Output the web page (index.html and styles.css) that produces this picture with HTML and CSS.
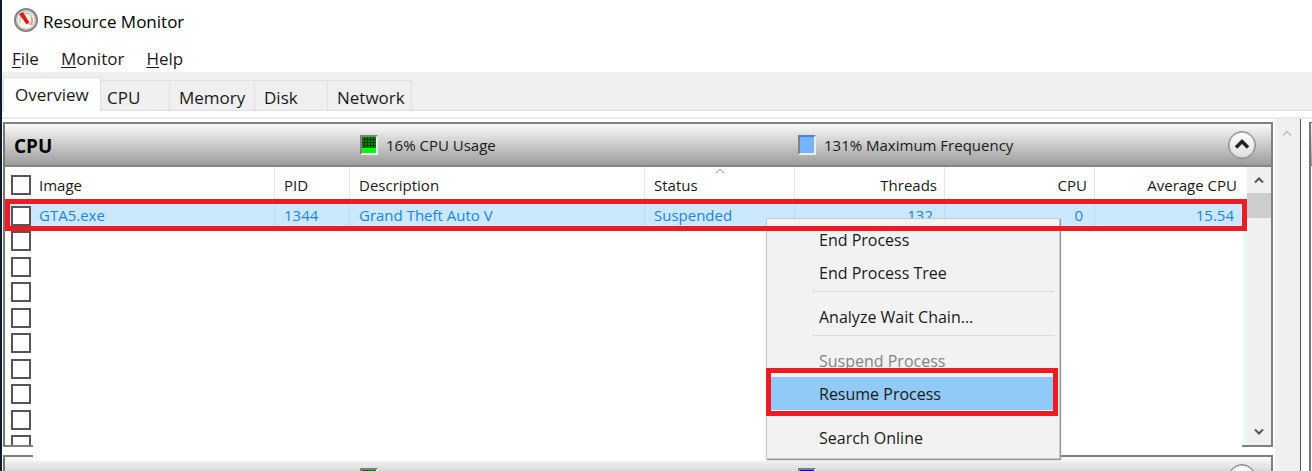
FILE: index.html
```html
<!DOCTYPE html>
<html lang="en">
<head>
    <meta charset="UTF-8">
    <title>Resource Monitor</title>
    <link rel="stylesheet" href="styles.css">
</head>
<body>
    <div class="window">
        <header class="title-bar">
            <svg class="app-icon" viewBox="0 0 24 24" width="24" height="24">
                <circle cx="12" cy="12" r="11" fill="#e4e2de" stroke="#85827d" stroke-width="2"/>
                <circle cx="12" cy="12" r="9" fill="#f8f6f2" stroke="#c5c2bc"/>
                <path d="M6 15V11a6 6 0 0 1 12 0v5h-3" fill="none" stroke="#c9bfb2" stroke-width="1.3"/>
                <path d="M17 9c2 3 1 6-1 8" fill="none" stroke="#eda273" stroke-width="1.8"/>
                <path d="M5 6L9 4L15.500 14.500L12.500 16.500Z" fill="#d8201f"/>
            </svg>
            <h1>Resource Monitor</h1>
        </header>

        <nav class="menu-bar">
            <button><u>F</u>ile</button>
            <button><u>M</u>onitor</button>
            <button><u>H</u>elp</button>
        </nav>

        <div class="tabs">
            <button class="tab active">Overview</button>
            <button class="tab tab-cpu">CPU</button>
            <button class="tab tab-memory">Memory</button>
            <button class="tab tab-disk">Disk</button>
            <button class="tab tab-network">Network</button>
        </div>

        <main class="content">
            <div class="panels">
                <section class="panel">
                    <div class="panel-header">
                        <h2>CPU</h2>
                        <div class="stat"><span class="meter green"></span>16% CPU Usage</div>
                        <div class="stat"><span class="meter blue"></span>131% Maximum Frequency</div>
                        <button class="collapse" aria-label="Collapse CPU">
                            <svg viewBox="0 0 28 28" width="28" height="28"><path d="M8 16.500L14 10.500L20 16.500" fill="none" stroke="#222" stroke-width="3.500"/></svg>
                        </button>
                    </div>
                    <div class="panel-body">
                        <table>
                            <colgroup>
                                <col class="col-image"><col class="col-pid"><col><col class="col-num"><col class="col-num"><col class="col-num"><col class="col-average">
                            </colgroup>
                            <thead>
                                <tr>
                                    <th><label><input type="checkbox">Image</label></th>
                                    <th>PID</th>
                                    <th>Description</th>
                                    <th class="sorted">Status<svg class="sort" viewBox="0 0 10 6" width="10" height="6"><path d="M1 5L5 1L9 5" fill="none" stroke="#999"/></svg></th>
                                    <th class="num">Threads</th>
                                    <th class="num">CPU</th>
                                    <th class="num">Average CPU</th>
                                </tr>
                            </thead>
                            <tbody>
                                <tr class="selected">
                                    <td><label><input type="checkbox">GTA5.exe</label></td>
                                    <td>1344</td>
                                    <td>Grand Theft Auto V</td>
                                    <td>Suspended</td>
                                    <td class="num">132</td>
                                    <td class="num">0</td>
                                    <td class="num">15.54</td>
                                </tr>
                                <tr><td colspan="7"><input type="checkbox" aria-label="Process 2"></td></tr>
                                <tr><td colspan="7"><input type="checkbox" aria-label="Process 3"></td></tr>
                                <tr><td colspan="7"><input type="checkbox" aria-label="Process 4"></td></tr>
                                <tr><td colspan="7"><input type="checkbox" aria-label="Process 5"></td></tr>
                                <tr><td colspan="7"><input type="checkbox" aria-label="Process 6"></td></tr>
                                <tr><td colspan="7"><input type="checkbox" aria-label="Process 7"></td></tr>
                                <tr><td colspan="7"><input type="checkbox" aria-label="Process 8"></td></tr>
                                <tr><td colspan="7"><input type="checkbox" aria-label="Process 9"></td></tr>
                                <tr><td colspan="7"><input type="checkbox" aria-label="Process 10"></td></tr>
                            </tbody>
                        </table>
                        <div class="scrollbar">
                            <svg viewBox="0 0 12 8" width="12" height="8"><path d="M2 6.500L6 2.500L10 6.500" fill="none" stroke="#555" stroke-width="2"/></svg>
                            <div class="thumb"></div>
                            <svg class="down" viewBox="0 0 12 8" width="12" height="8"><path d="M2 1.500L6 5.500L10 1.500" fill="none" stroke="#555" stroke-width="2"/></svg>
                        </div>
                    </div>
                </section>

                <section class="panel">
                    <div class="panel-header">
                        <h2></h2>
                        <div class="stat"><span class="meter green"></span></div>
                        <div class="stat"><span class="meter navy"></span></div>
                        <button class="collapse" aria-label="Expand panel"></button>
                    </div>
                </section>

                <div class="blank blank-left"></div>
                <div class="blank blank-right"></div>

                <div class="context-menu">
                    <button>End Process</button>
                    <button>End Process Tree</button>
                    <hr>
                    <button>Analyze Wait Chain...</button>
                    <hr>
                    <button disabled>Suspend Process</button>
                    <button class="current">Resume Process</button>
                    <hr>
                    <button>Search Online</button>
                </div>
                <div class="row-frame"></div>
            </div>

            <div class="page-scroll">
                <svg viewBox="0 0 12 8" width="12" height="8"><path d="M2 6.500L6 2.500L10 6.500" fill="none" stroke="#bbb" stroke-width="1.500"/></svg>
            </div>
            <aside class="graphs"><div class="panel-header"></div></aside>
        </main>
    </div>
</body>
</html>
```

FILE: styles.css
```css
* {
    box-sizing: border-box;
}
body {
    margin: 0;
    overflow: hidden;
    background: #fff;
    color: #1a1a1a;
    font-family: "Open Sans", "Noto Sans", sans-serif;
    font-size: 16px;
    line-height: 24px;
}
h1, h2 {
    margin: 0;
}
button {
    border: none;
    background: none;
    padding: 0;
    color: inherit;
    font: inherit;
    text-align: left;
}
svg {
    display: block;
}
.window {
    display: flex;
    flex-direction: column;
    height: 100vh;
    border-left: 2px solid #0d1b2c;
}

/* title and menus */
.title-bar {
    display: flex;
    align-items: center;
    gap: 5px;
    flex: none;
    height: 44px;
    padding: 0 12px 4px;
}
.title-bar h1 {
    font-size: 17px;
    font-weight: normal;
    color: #000;
    padding-top: 3px;
}
.menu-bar {
    display: flex;
    gap: 22px;
    flex: none;
    height: 28px;
    padding: 3px 10px;
    font-size: 17px;
}
.menu-bar u {
    text-underline-offset: 2px;
}
.tabs {
    display: flex;
    align-items: flex-end;
    flex: none;
    height: 39px;
    padding-left: 1px;
    background: #efefef;
    border-bottom: 1px solid #e0e0e0;
}
.tab {
    height: 30px;
    padding: 4px 0 0 9px;
    border: 1px solid #e0e0e0;
    border-width: 1px 1px 0 0;
    font-size: 17px;
}
.tab.active {
    width: 98px;
    height: 34px;
    margin-bottom: -1px;
    padding: 0 0 0 11px;
    border-left-width: 1px;
    background: #fff;
}
.tab-cpu {
    width: 69px;
    padding-left: 6px;
}
.tab-memory {
    width: 85px;
}
.tab-disk {
    width: 73px;
}
.tab-network {
    width: 84px;
}

/* panels */
.content {
    display: flex;
    flex: 1;
    min-height: 0;
    margin-top: 6px;
    overflow: hidden;
    border-top: 2px solid #ebebeb;
}
.panels {
    position: relative;
    flex: 1;
    padding: 3px 2px 0 1px;
}
.panel {
    border: 2px solid #808080;
    border-left-color: #777;
    margin-bottom: 8px;
}
.panel-header {
    display: grid;
    grid-template-columns: 355px 438px 1fr 28px;
    align-items: center;
    height: 43px;
    padding: 0 15px 0 0;
    background: linear-gradient(#fafafa, #9c9c9c);
    border-bottom: 2px solid #858585;
}
.panel-header h2 {
    padding: 3px 0 0 9px;
    color: #000;
    font-size: 19px;
    font-weight: bold;
}
.stat {
    display: flex;
    align-items: center;
    gap: 8px;
    font-size: 15px;
}
.meter {
    width: 18px;
    height: 20px;
    border: 2px solid #808080;
    border-right-color: #eee;
    border-bottom-color: #eee;
}
.meter.green {
    background:
        linear-gradient(#0f0, #0f0) bottom / 100% 5px no-repeat,
        repeating-linear-gradient(90deg, transparent 0 2px, #003c00 2px 3px),
        repeating-linear-gradient(#008a00 0 2px, #003c00 2px 3px);
}
.meter.blue {
    background: #75b5ff;
    border-top-color: #5580d0;
}
.meter.navy {
    background: #0000d0;
}
.collapse {
    width: 28px;
    height: 28px;
    border: 1px solid #858585;
    border-radius: 50%;
    background: linear-gradient(#fff, #ddd);
    box-shadow: inset 0 0 0 1px #bbb;
}
.collapse svg {
    margin: -1px;
}
.panel-body {
    display: flex;
    height: 278px;
    overflow: hidden;
}

/* process table */
table {
    flex: 1;
    width: 0;
    height: 0;
    table-layout: fixed;
    border-collapse: separate;
    border-spacing: 0;
    font-size: 15px;
}
.col-image {
    width: 270px;
}
.col-pid {
    width: 75px;
}
.col-num {
    width: 150px;
}
.col-average {
    width: 152px;
}
th, td {
    padding: 0 0 0 9px;
    border-right: 1px solid #e5e5e5;
    font-weight: normal;
    text-align: left;
    white-space: nowrap;
}
th {
    height: 36px;
    line-height: 36px;
}
td {
    height: 25px;
    line-height: 25px;
}
tr:nth-child(even) td {
    height: 26px;
}
th:first-child, td:first-child {
    padding-left: 6px;
}
th:last-child {
    padding-right: 10px;
    border-right: none;
}
.num {
    padding-right: 7px;
    text-align: right;
}
td.num {
    padding-right: 11px;
}
td:last-child, td.num:last-child {
    padding-right: 9px;
    border-right: 4px solid #edf5ff;
}
.sorted {
    position: relative;
}
.sort {
    position: absolute;
    top: 1px;
    left: 47%;
}
label {
    display: flex;
    align-items: center;
    gap: 8px;
}
input[type="checkbox"] {
    appearance: none;
    display: block;
    flex: none;
    width: 20px;
    height: 20px;
    margin: 0;
    border: 2px solid #555;
    background: #fff;
}
.selected td {
    background: #cce8ff;
    border-right-color: #b5dcff;
    color: #1a86dc;
}
.scrollbar {
    display: flex;
    flex-direction: column;
    align-items: center;
    width: 24px;
    padding: 9px 0 9px;
    background: #f0f0f0;
}
.thumb {
    align-self: stretch;
    height: 25px;
    margin-top: 9px;
    background: #cdcdcd;
}
.down {
    margin-top: auto;
}
.page-scroll {
    width: 26px;
    padding: 10px 0 0 6px;
    background: #f0f0f0;
    border-right: 1px solid #555;
}
.graphs {
    width: 3px;
    margin: 3px 0 0 8px;
    border-top: 1px solid #666;
    border-left: 2px solid #777;
}

/* cleared area behind the menu */
.blank {
    position: absolute;
    background: #fff;
}
.blank-left {
    top: 324px;
    left: 31px;
    width: 733px;
    height: 18px;
}
.blank-right {
    top: 324px;
    right: 33px;
    width: 182px;
    height: 6px;
}

/* context menu */
.context-menu {
    position: absolute;
    top: 99px;
    left: 764px;
    width: 294px;
    padding: 4px;
    border: 1px solid #c8c8c8;
    background: #f2f2f2;
    box-shadow: 1px 1px 1px #999;
}
.context-menu button {
    display: block;
    width: 100%;
    height: 33px;
    padding-left: 48px;
}
.context-menu button:disabled {
    color: #838383;
}
.context-menu hr {
    height: 1px;
    margin: 2px 0 8px 41px;
    border: none;
    background: #dcdcdc;
}
.context-menu .current {
    position: relative;
    background: #91c9f7;
}
.current::after {
    content: "";
    position: absolute;
    inset: -9px -3px -6px -5px;
    border: 5px solid #ed1c24;
}
.row-frame {
    position: absolute;
    top: 80px;
    left: 3px;
    right: 28px;
    height: 32px;
    border: 5px solid #ed1c24;
}
```
